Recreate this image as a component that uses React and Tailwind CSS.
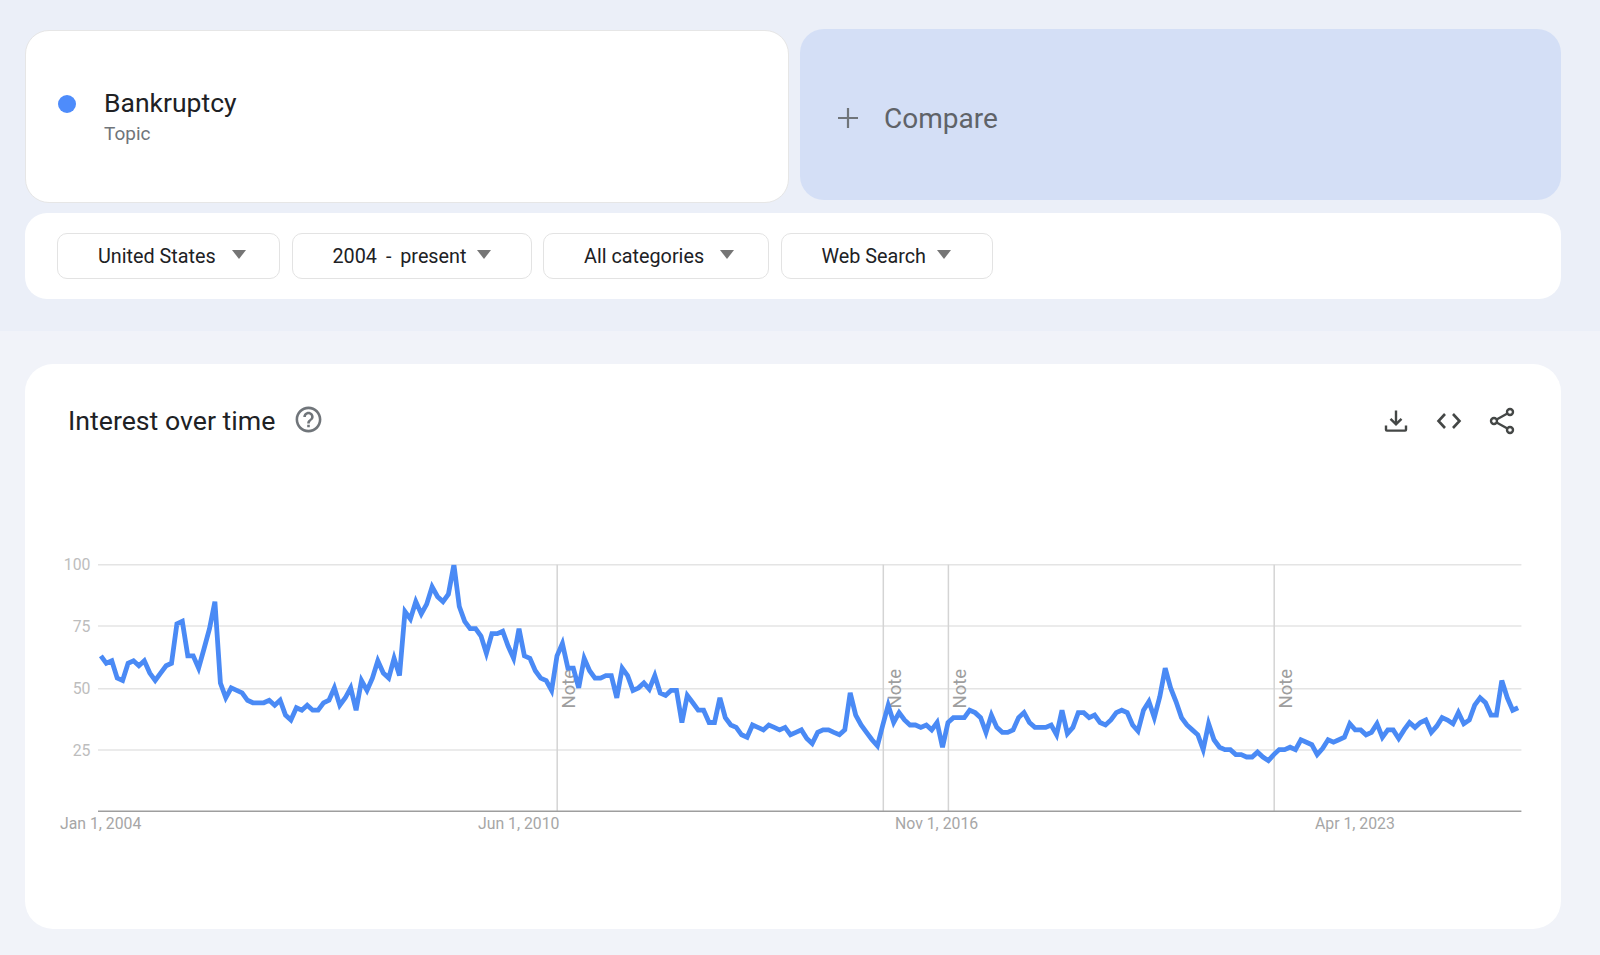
import { MdHelpOutline } from "react-icons/md";

const FONT = "font-['Roboto','Liberation_Sans',sans-serif]";

// monthly interest values, read off the chart
const VALUES = [
  63, 60, 61, 54, 53, 60, 61, 59, 61, 56, 53, 56, 59, 60, 76, 77, 63, 63, 58, 66,
  74, 85, 52, 46, 50, 49, 48, 45, 44, 44, 44, 45, 43, 45, 39, 37, 42, 41, 43, 41,
  41, 44, 45, 50, 43, 46, 50, 41, 53, 49, 54, 61, 56, 54, 62, 55, 81, 78, 85, 80,
  84, 91, 87, 85, 88, 100, 83, 77, 74, 74, 71, 64, 72, 72, 73, 67, 62, 74, 63, 62,
  57, 54, 53, 49, 63, 68, 58, 58, 50, 62, 57, 54, 54, 55, 55, 46, 58, 55, 49, 50,
  52, 49.5, 55, 48, 47, 49, 49, 36, 47, 44, 41, 41, 36, 36, 46, 38, 35, 34, 31, 30,
  35, 34, 33, 35, 34, 33, 34, 31, 32, 33, 29.5, 27.5, 32, 33, 33, 32, 31, 33, 48, 39,
  35, 32, 29, 26.5, 35, 43, 36, 40, 37, 35, 35, 34, 35, 33, 36, 26, 36, 38, 38, 38,
  41, 40, 38, 32, 39, 34, 32, 32, 33, 38, 40, 36, 34, 34, 34, 35, 31, 41, 31.5, 34,
  40, 40, 38, 39, 36, 35, 37, 40, 41, 40, 35, 32.5, 41, 44.5, 38, 46.5, 58, 50, 44.5, 38,
  35, 33, 31, 25, 35.5, 29, 26, 25, 25, 23, 23, 22, 22, 24, 22, 20.5, 23, 25, 25, 26,
  25, 29, 28, 27, 23, 25.5, 29, 28, 29, 30, 35.5, 33, 33, 31, 32, 35.5, 30, 33, 33, 29.5,
  33, 36, 34, 36, 37, 32, 34.5, 38, 37, 35.5, 40, 35.5, 37, 43, 46, 44, 39, 39, 53, 46,
  41, 42,
];

const X0 = 100.9;
const STEP = 5.43;
const BASE_Y = 811.3;
const UNIT = 2.467;

const FILTERS = [
  { label: "United States", box: "w-[223px] gap-[16px]" },
  { label: "2004 - present", box: "w-[240px] gap-[11px] [word-spacing:4px]" },
  { label: "All categories", box: "w-[226px] gap-[16px]" },
  { label: "Web Search", box: "w-[212px] gap-[11px]" },
];

function Caret() {
  return (
    <svg width="14" height="9" viewBox="0 0 14 9" className="shrink-0 mb-0.5">
      <polygon points="0,0 14,0 7,9" fill="#757575" />
    </svg>
  );
}

function FilterButton({ label, box }) {
  return (
    <button className={`flex items-center h-[46px] pl-[40px] bg-white border border-[#e3e3e3] rounded-[10px] ${box}`}>
      <span className="mt-[3px] text-[19.8px] leading-none text-[#202124]">{label}</span>
      <Caret />
    </button>
  );
}

function DownloadIcon() {
  return (
    <svg width="24" height="24" viewBox="0 0 24 24" fill="none" stroke="#444746" strokeWidth="2.4">
      <path d="M12 1.5V15" />
      <path d="M6.5 9.8 12 15.2l5.5-5.4" />
      <path d="M2 16.5v4.2c0 .5.4.9.9.9h18.2c.5 0 .9-.4.9-.9v-4.2" />
    </svg>
  );
}

function CodeIcon() {
  return (
    <svg width="28" height="20" viewBox="0 0 28 20" fill="none" stroke="#444746" strokeWidth="2.6">
      <path d="M10 3 3.5 10l6.5 7" />
      <path d="M18 3l6.5 7-6.5 7" />
    </svg>
  );
}

function ShareIcon() {
  return (
    <svg width="26" height="28" viewBox="0 0 26 28" fill="none" stroke="#444746" strokeWidth="2.4">
      <circle cx="21" cy="5" r="3" />
      <circle cx="5" cy="14" r="3" />
      <circle cx="21" cy="23" r="3" />
      <path d="M7.6 12.5 18.4 6.5M7.6 15.5l10.8 6" />
    </svg>
  );
}

function TrendChart() {
  const points = VALUES.map((v, i) => `${(X0 + i * STEP).toFixed(1)},${(BASE_Y - v * UNIT).toFixed(1)}`).join(" ");
  const grid = [
    { label: "100", y: 564.7 },
    { label: "75", y: 626 },
    { label: "50", y: 688.7 },
    { label: "25", y: 750 },
  ];
  const notes = [557.2, 883.3, 948.4, 1274.2];
  const dates = [
    { label: "Jan 1, 2004", x: 60 },
    { label: "Jun 1, 2010", x: 478 },
    { label: "Nov 1, 2016", x: 895 },
    { label: "Apr 1, 2023", x: 1315 },
  ];
  return (
    <svg width="1536" height="310" viewBox="25 540 1536 310" className="block" fontFamily="Roboto, sans-serif">
      <defs>
        <clipPath id="plot">
          <rect x="98" y="564.7" width="1423.4" height="246.6" />
        </clipPath>
      </defs>
      {grid.map((g) => (
        <g key={g.label}>
          <line x1="98" x2="1521.4" y1={g.y} y2={g.y} stroke="#e4e4e4" strokeWidth="1.5" />
          <text x="90.5" y={g.y + 5.5} textAnchor="end" fontSize="15.8" fill="#bdbdbd">{g.label}</text>
        </g>
      ))}
      {notes.map((x) => (
        <g key={x}>
          <line x1={x} x2={x} y1="564.7" y2="811.3" stroke="#d4d4d4" strokeWidth="1.5" />
          <text transform={`translate(${x + 17.5} 708.5) rotate(-90)`} fontSize="18.5" fill="#9e9e9e">Note</text>
        </g>
      ))}
      <line x1="98" x2="1521.4" y1="811.3" y2="811.3" stroke="#9e9e9e" strokeWidth="1.5" />
      {dates.map((d) => (
        <text key={d.label} x={d.x} y="829" fontSize="15.8" fill="#a6a6a6">{d.label}</text>
      ))}
      <polyline points={points} clipPath="url(#plot)" fill="none" stroke="#4a8af5" strokeWidth="4.8" />
    </svg>
  );
}

export default function App() {
  return (
    <div className={`min-h-[955px] bg-[#f1f3f9] ${FONT}`}>
      <div className="h-[331px] bg-[#ebeff8] pt-[29px] pl-[25px] pr-[39px]">
        <div className="flex gap-[11px]">
          <div className="flex items-center w-[764px] h-[173px] mt-px pl-[32px] pb-[3px] bg-white border border-[#e6e6e6] rounded-[24px]">
            <span className="w-[18px] h-[18px] rounded-full bg-[#4e8cfb] mb-[22px]" />
            <div className="ml-[28px] mt-[4px]">
              <div className="text-[26.5px] leading-[32px] text-[#202124] mb-[2px]">Bankruptcy</div>
              <div className="text-[19px] leading-[26px] text-[#70757a]">Topic</div>
            </div>
          </div>
          <div className="flex items-center w-[761px] h-[171px] pl-[38px] pt-[6px] bg-[#d4dff6] rounded-[24px]">
            <svg width="20" height="20" viewBox="0 0 20 20" stroke="#70757a" strokeWidth="2.2">
              <path d="M10 0v20M0 10h20" />
            </svg>
            <span className="ml-[26px] mt-[3px] text-[28px] font-normal text-[#5f6368]">Compare</span>
          </div>
        </div>
        <div className="flex items-center gap-[11.5px] h-[86px] mt-[10px] pl-[32px] pb-[1px] bg-white rounded-[22px]">
          {FILTERS.map((f) => (
            <FilterButton key={f.label} label={f.label} box={f.box} />
          ))}
        </div>
      </div>

      <div className="mx-[25px] mt-[33px] w-[1536px] h-[565px] bg-white rounded-[28px]">
        <div className="flex items-center h-[112px] pl-[43px] pr-[46px] pt-[2px]">
          <h2 className="text-[26.7px] font-normal text-[#202124]">Interest over time</h2>
          <MdHelpOutline className="ml-[18px] mb-1 text-[#70757a]" size={31} />
          <div className="ml-auto flex items-center gap-[26px]">
            <span className="mr-px"><DownloadIcon /></span>
            <CodeIcon />
            <ShareIcon />
          </div>
        </div>
        <div className="mt-[64px]">
          <TrendChart />
        </div>
      </div>
    </div>
  );
}
